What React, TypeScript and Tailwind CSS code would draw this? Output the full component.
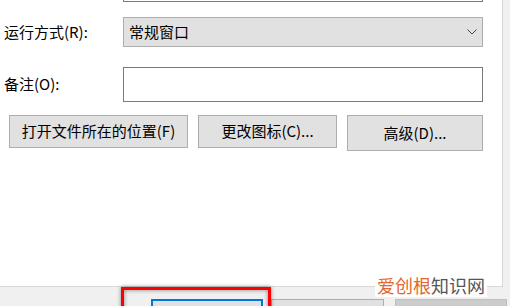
import React from 'react';

export default function App() {
  return (
    <div className="relative w-[510px] h-[306px] overflow-hidden bg-[#f0f0f0] text-[15px] text-black font-['Microsoft_YaHei','Noto_Sans_CJK_SC',sans-serif]">
      {/* Properties panel */}
      <div className="flex flex-col w-[503px] h-[287px] bg-white border-r border-b border-[#d9d9d9]">
        {/* target field, cut off at the top */}
        <div className="ml-[123px] w-[360px] h-[2px] border-x border-b border-[#7a7a7a]" />

        {/* Run */}
        <div className="flex items-center mt-[15px] h-[30px]">
          <div className="w-[123px] pl-[4px] pt-[1px]">运行方式(R):</div>
          <div className="flex items-center justify-between w-[360px] h-[30px] pl-[5px] pr-[5px] bg-[#e1e1e1] border border-[#adadad]">
            <span>常规窗口</span>
            <svg width="10" height="6" viewBox="0 0 10 6" fill="none">
              <polyline points="0.5,0.5 5,5 9.5,0.5" stroke="#444" strokeWidth="1" />
            </svg>
          </div>
        </div>

        {/* Comment */}
        <div className="flex items-center mt-[20px] h-[35px]">
          <div className="w-[123px] pl-[4px]">备注(O):</div>
          <div className="w-[360px] h-[35px] bg-white border border-[#7a7a7a]" />
        </div>

        {/* Actions */}
        <div className="flex items-start mt-[13px] pl-[9px]">
          <button className="w-[179px] h-[33px] bg-[#e1e1e1] border border-[#adadad]">打开文件所在的位置(F)</button>
          <button className="ml-[10px] w-[139px] h-[33px] bg-[#e1e1e1] border border-[#adadad]">更改图标(C)...</button>
          <button className="ml-[10px] w-[136px] h-[36px] bg-[#e1e1e1] border border-[#adadad]">高级(D)...</button>
        </div>
      </div>

      {/* Dialog buttons */}
      <div className="flex mt-[12px]">
        <div className="ml-[151px] w-[112px] h-[30px] bg-[#e1e1e1] border-2 border-[#0078d7]" />
        <div className="ml-[8px] w-[113px] h-[30px] bg-[#e1e1e1] border border-[#adadad]" />
        <div className="ml-[11px] w-[112px] h-[30px] bg-[#cccccc] border border-[#bfbfbf]" />
      </div>

      {/* red highlight */}
      <div className="absolute left-[121px] top-[287px] w-[150px] h-[30px] border-[3px] border-[#ff0000] shadow-[0_0_4px_rgba(0,0,0,0.45),inset_0_0_4px_rgba(0,0,0,0.45)]" />

      {/* watermark */}
      <div className="absolute left-[375px] top-[274px] px-[2px] bg-white text-[18px] leading-[23px] font-['Noto_Sans_CJK_SC',sans-serif]">
        <span className="text-[#e3662e]">爱创根</span>
        <span className="text-[#555555]">知识网</span>
      </div>
    </div>
  );
}
